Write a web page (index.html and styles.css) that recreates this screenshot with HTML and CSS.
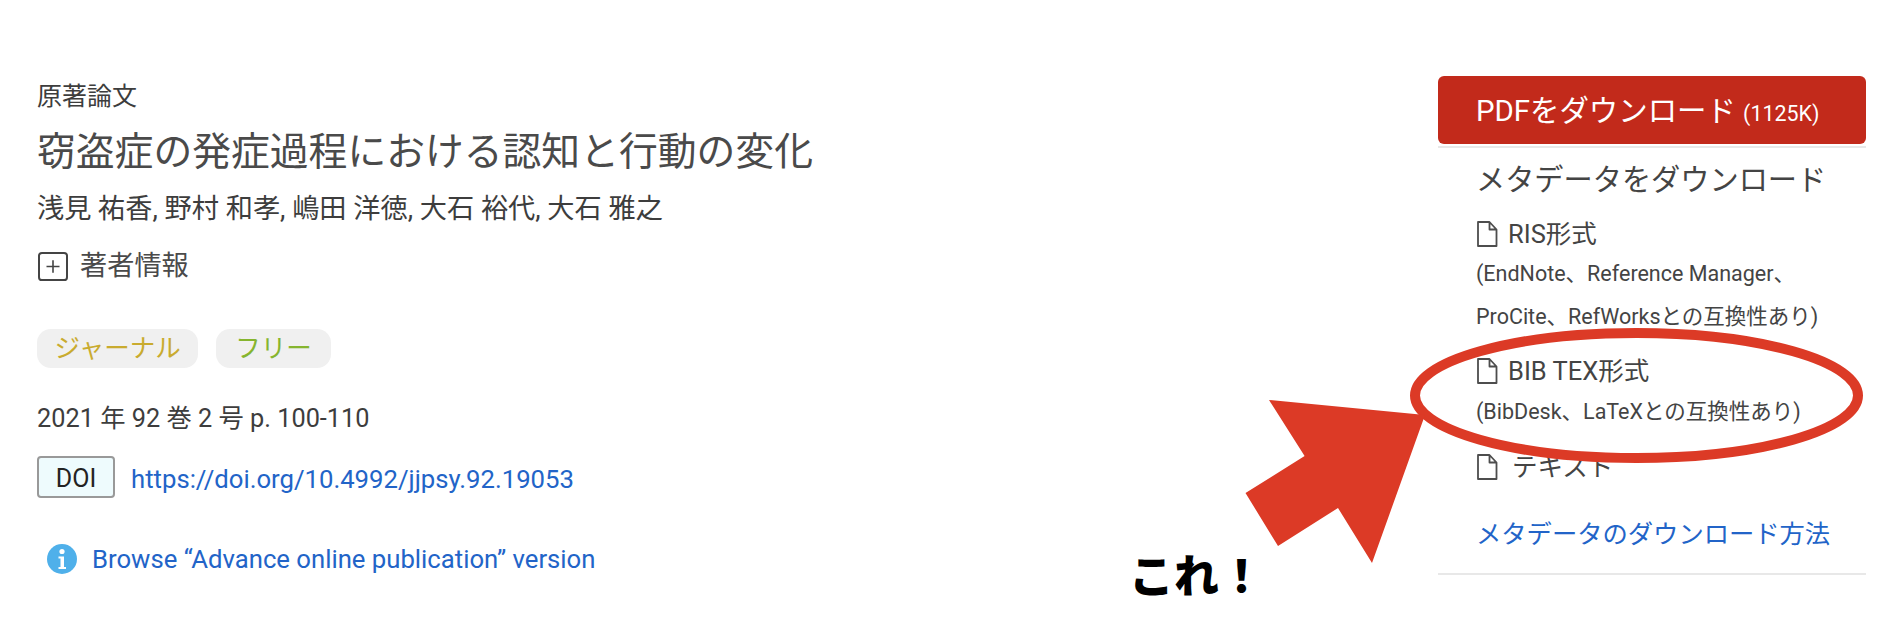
FILE: index.html
```html
<!DOCTYPE html>
<html lang="ja">
<head>
<meta charset="utf-8">
<title>窃盗症の発症過程における認知と行動の変化</title>
<link rel="stylesheet" href="styles.css">
</head>
<body>
<div class="page">
  <main class="article">
    <div class="type">原著論文</div>
    <h1 class="title">窃盗症の発症過程における認知と行動の変化</h1>
    <div class="authors">浅見 祐香, 野村 和孝, 嶋田 洋徳, 大石 裕代, 大石 雅之</div>
    <div class="info">
      <svg class="plus" viewBox="0 0 30 30" width="30" height="29" preserveAspectRatio="none"><rect x="1" y="1" width="28" height="28" rx="3" fill="none" stroke="#444" stroke-width="2"/><path d="M15 8.5v13M8.5 15h13" fill="none" stroke="#444" stroke-width="1.6"/></svg>
      <span>著者情報</span>
    </div>
    <div class="tags"><span class="tag tag-journal">ジャーナル</span><span class="tag tag-free">フリー</span></div>
    <div class="date">2021 年 92 巻 2 号 p. 100-110</div>
    <div class="doi"><span class="doi-box">DOI</span><a class="link doi-link">https://doi.org/10.4992/jjpsy.92.19053</a></div>
    <div class="browse">
      <svg class="info-icon" viewBox="0 0 30 30" width="30" height="30"><circle cx="15" cy="15" r="15" fill="#4fb0ea"/><circle cx="15" cy="7.5" r="2.6" fill="#fff"/><path d="M11.5 12.5h5.5v10.5h2v2h-7.5v-2h2v-8.500h-2z" fill="#fff"/></svg>
      <a class="link">Browse “Advance online publication” version</a>
    </div>
  </main>
  <aside class="side">
    <div class="pdf">PDFをダウンロード <small>(1125K)</small></div>
    <div class="meta">
      <div class="meta-head">メタデータをダウンロード</div>
      <div class="fmt fmt-first">
        <svg class="file" viewBox="0 0 22 26" width="22" height="26"><path d="M2 1h11.500l7 7.500v16.500h-18.500zM13.500 1v7.500h7" fill="none" stroke="#4d4d4d" stroke-width="1.800" stroke-linejoin="round"/></svg>
        <span>RIS形式</span>
      </div>
      <div class="note note-first">(EndNote、Reference Manager、<br>ProCite、RefWorksとの互換性あり)</div>
      <div class="fmt">
        <svg class="file" viewBox="0 0 22 26" width="22" height="26"><path d="M2 1h11.500l7 7.500v16.500h-18.500zM13.500 1v7.500h7" fill="none" stroke="#4d4d4d" stroke-width="1.800" stroke-linejoin="round"/></svg>
        <span>BIB TEX形式</span>
      </div>
      <div class="note">(BibDesk、LaTeXとの互換性あり)</div>
      <div class="fmt fmt-text">
        <svg class="file" viewBox="0 0 22 26" width="22" height="26"><path d="M2 1h11.500l7 7.500v16.500h-18.500zM13.500 1v7.500h7" fill="none" stroke="#4d4d4d" stroke-width="1.800" stroke-linejoin="round"/></svg>
        <span class="text-label">テキスト</span>
      </div>
      <a class="link how">メタデータのダウンロード方法</a>
    </div>
  </aside>
</div>
<svg class="overlay" viewBox="0 0 1898 642" width="1898" height="642">
  <ellipse cx="1636.500" cy="395.500" rx="221.500" ry="62.500" fill="none" stroke="#dc3a26" stroke-width="10"/>
  <polygon points="1269,400 1425,415 1372,563 1338,508 1278,546 1245.500,493 1304.600,456" fill="#dc3a26"/>
</svg>
<div class="callout">これ！</div>
</body>
</html>
```
FILE: styles.css
```css
* { box-sizing: border-box; }
html, body { margin: 0; padding: 0; background: #fff; }
body {
  position: relative;
  width: 1898px;
  height: 642px;
  overflow: hidden;
  font-family: Roboto, "Noto Sans CJK JP", sans-serif;
  color: #444;
}
.page { display: flex; justify-content: space-between; padding-right: 32px; }
.article { padding: 82px 0 0 37px; }
.type { font-size: 25px; line-height: 30px; color: #3d3d3d; }
.title { margin: 15px 0 0; font-size: 38.800px; line-height: 50px; font-weight: 400; color: #4a4a4a; white-space: nowrap; }
.authors { margin-top: 14px; font-size: 27.200px; line-height: 36px; color: #3d3d3d; white-space: nowrap; }
.info { margin-top: 21px; padding-left: 1px; display: flex; align-items: center; gap: 12px; font-size: 27.200px; line-height: 36px; color: #4a4a4a; }
.plus { display: block; }
.tags { margin-top: 45px; display: flex; gap: 18px; }
.tag { height: 39px; padding: 0 17.500px; border-radius: 14px; background: #f0f0f0; font-size: 25.500px; line-height: 39px; }
.tag-journal { color: #c9ab2f; }
.tag-free { padding: 0 19px; color: #86b52f; }
.date { margin-top: 33px; font-size: 25.300px; line-height: 36px; color: #3d3d3d; }
.doi { margin-top: 19px; display: flex; align-items: center; gap: 16px; }
.doi-box { width: 78px; height: 42px; border: 2px solid #999; border-radius: 4px; background: #eefbfd; text-align: center; font-size: 25px; line-height: 42px; color: #222; }
.link { color: #2264c8; }
.doi-link { padding-top: 4px; font-size: 25.700px; line-height: 36px; white-space: nowrap; }
.browse { margin-top: 43px; padding-left: 10px; display: flex; align-items: center; gap: 15px; font-size: 25.700px; line-height: 36px; white-space: nowrap; }
.info-icon { display: block; }
.side { width: 428px; padding-top: 76px; }
.pdf { height: 68px; margin-bottom: 2px; padding-left: 38px; border-radius: 6px; background: #c22a1b; color: #fff; font-size: 29.400px; line-height: 70px; white-space: nowrap; }
.pdf small { font-size: 21.400px; }
.meta { padding: 12px 38px 20px; border-top: 2px solid #e8e8e8; border-bottom: 2px solid #e8e8e8; }
.meta-head { font-size: 29.200px; line-height: 40px; white-space: nowrap; }
.fmt { margin-top: 17px; display: flex; align-items: center; gap: 10px; font-size: 25.500px; line-height: 32px; white-space: nowrap; }
.fmt-first { margin-top: 18px; }
.fmt-text { margin-top: 18px; }
.text-label { margin-left: 4px; }
.file { display: block; }
.note { margin-top: 3px; font-size: 21.500px; line-height: 43px; white-space: nowrap; }
.note-first { margin-top: 2px; }
.how { display: block; margin-top: 34px; font-size: 25.300px; line-height: 36px; white-space: nowrap; }
.overlay { position: absolute; left: 0; top: 0; pointer-events: none; }
.callout { position: absolute; left: 1129px; top: 550px; font-size: 45px; line-height: 56px; font-weight: 900; color: #000; white-space: nowrap; }
```
